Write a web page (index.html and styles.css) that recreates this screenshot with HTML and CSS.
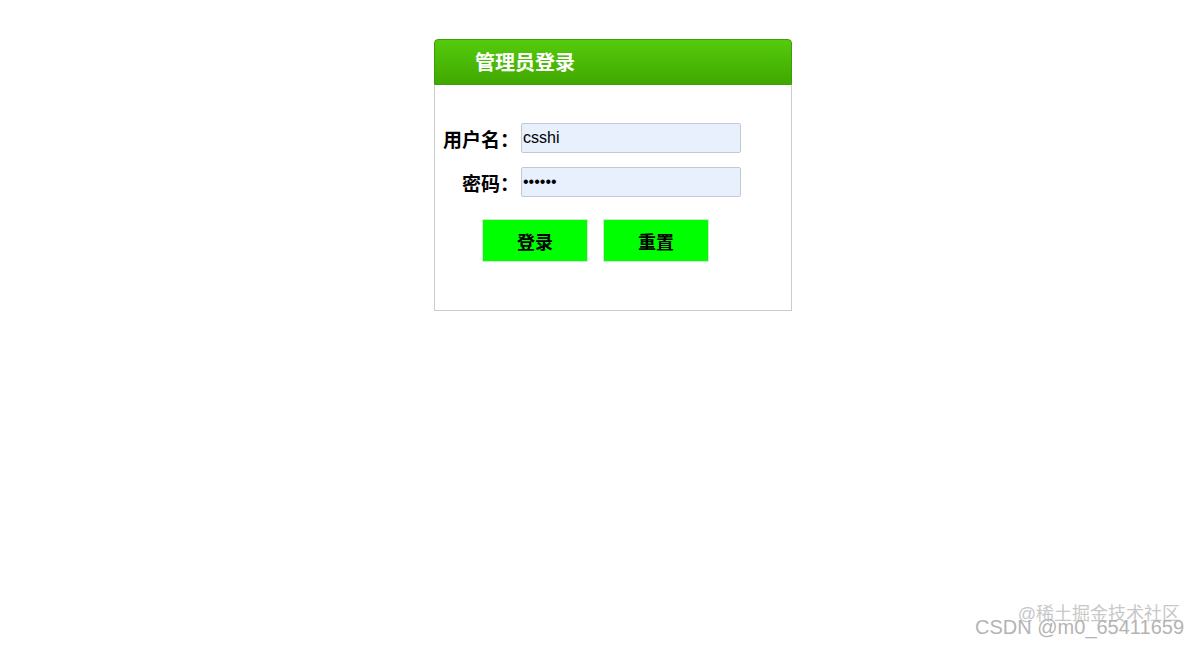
FILE: index.html
```html
<!DOCTYPE html>
<html lang="zh-CN">
<head>
  <meta charset="UTF-8" />
  <title>管理员登录</title>
  <link rel="stylesheet" href="styles.css">
</head>
<body>
  <div class="login">
    <div class="login-head">管理员登录</div>
    <form class="login-body">
      <div class="row">
        <label for="user">用户名：</label>
        <input id="user" type="text" value="csshi">
      </div>
      <div class="row">
        <label for="pwd">密码：</label>
        <input id="pwd" type="password" value="123456">
      </div>
      <div class="btns">
        <button type="button">登录</button>
        <button type="reset">重置</button>
      </div>
    </form>
  </div>

  <div class="mark">
    <span class="mark-a">@稀土掘金技术社区</span>
    <span class="mark-b">CSDN @m0_65411659</span>
  </div>
</body>
</html>
```

FILE: styles.css
```css
body {
  margin: 0;
  font-family: 'Liberation Sans', 'Noto Sans CJK SC', sans-serif;
  background-color: #fff;
  color: #000;
}
.login {
  width: 358px;
  margin: 39px 0 0 434px;
}
.login-head {
  height: 44px;
  line-height: 46px;
  padding-left: 40px;
  color: #fff;
  font-size: 20px;
  font-weight: bold;
  background: linear-gradient(#56cb0c, #40a800);
  border: 1px solid #3c9c0c;
  border-radius: 4px 4px 0 0;
}
.login-body {
  margin: 0;
  padding: 38px 0 48px;
  border: 1px solid #ccc;
  border-top: none;
}
.row {
  display: flex;
  align-items: center;
  margin-bottom: 14px;
}
.row label {
  width: 84px;
  text-align: right;
  font-size: 19px;
  font-weight: bold;
  margin-right: 2px;
}
.row input {
  box-sizing: border-box;
  width: 220px;
  height: 30px;
  padding: 0 1px;
  font-size: 16px;
  font-family: 'Liberation Sans', sans-serif;
  background-color: #e8f0fe;
  border: 1px solid #c4c8d0;
  border-radius: 2px;
}
.btns {
  display: flex;
  gap: 15px;
  padding-left: 47px;
  margin-top: 22px;
}
.btns button {
  width: 106px;
  height: 43px;
  background-color: #00ff00;
  border: 1px solid #d0e8d0;
  font-size: 18px;
  font-weight: bold;
  font-family: 'Noto Sans CJK SC', sans-serif;
  color: #000;
  cursor: pointer;
}
.mark {
  position: absolute;
  right: 14px;
  bottom: 6px;
  width: 210px;
  height: 44px;
}
.mark-a {
  position: absolute;
  right: 4px;
  top: 4px;
  font-size: 18px;
  color: #c8c8c8;
}
.mark-b {
  position: absolute;
  right: 0;
  bottom: 0;
  font-size: 20px;
  color: #b4b4b4;
}
```
